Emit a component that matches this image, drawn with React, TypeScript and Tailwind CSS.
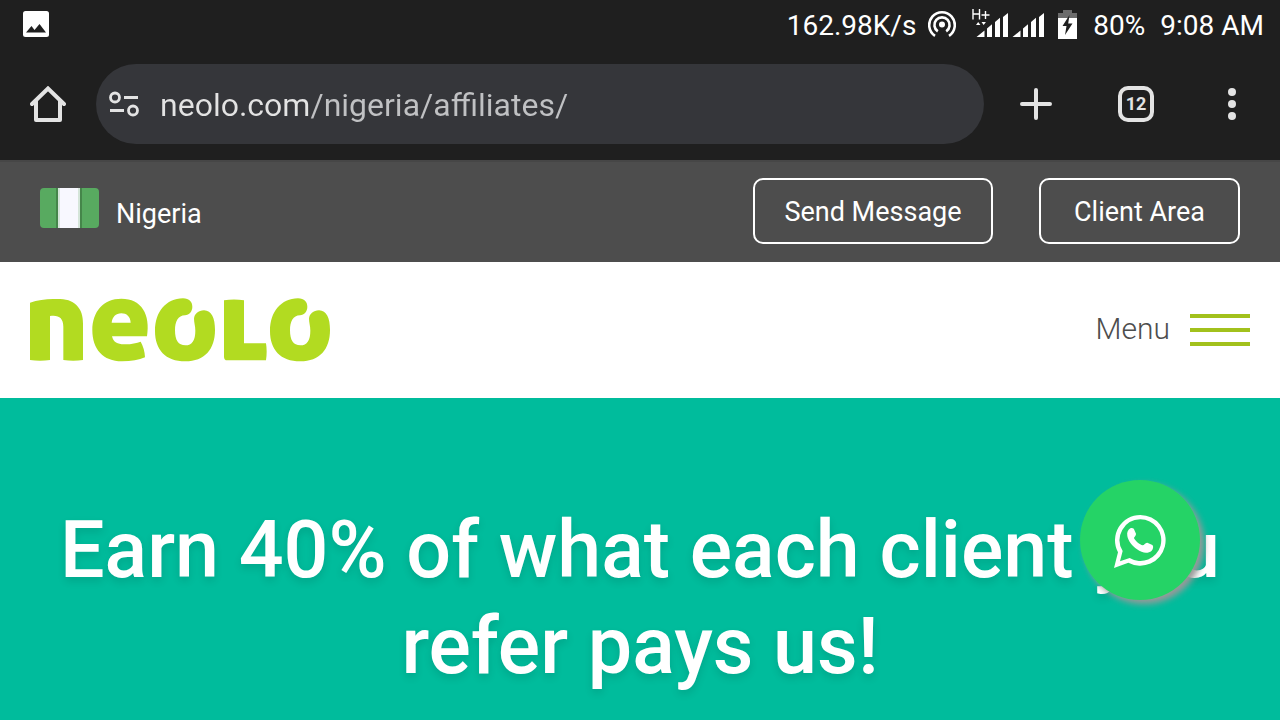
function PictureIcon() {
  return (
    <svg className="size-[26px]" viewBox="0 0 26 26" aria-hidden="true">
      <rect width="26" height="26" rx="2.500" fill="#fff" />
      <path d="M3 21.500 8.500 15l3 4 5-6 6.500 8.500z" fill="#1f1f1f" />
    </svg>
  );
}

function HotspotIcon() {
  return (
    <svg className="h-7 w-7" viewBox="0 0 28 28" fill="none" stroke="#fff" strokeWidth="2.600" aria-hidden="true">
      <circle cx="14" cy="14.500" r="3" fill="#fff" stroke="none" />
      <path d="M9.800 21.300A7.600 7.600 0 1 1 18.200 21.300" />
      <path d="M7 25.800A12.800 12.800 0 1 1 21 25.800" />
    </svg>
  );
}

function SignalIcon() {
  return (
    <svg className="-mt-1 h-[29px] w-[72px]" viewBox="0 0 72 29" fill="#fff" aria-hidden="true">
      <path d="M4.500 29l8-6.500V29zM15 20.500l5-4.300V29h-5zM23 14l5-4.300V29h-5zM31 9l5-4v24h-5z" />
      <path d="M40.500 29l8-6.500V29zM51 20.500l5-4.300V29h-5zM59 14l5-4.300V29h-5zM67 9l5-4v24h-5z" />
      <path d="M4 17l2.200-3 2.200 3zM9.500 14h4.400l-2.200 3z" />
      <path d="M1 1v10.500M7.500 1v10.500M1 6h6.500M9.500 7h8M13.500 3v8" fill="none" stroke="#fff" strokeWidth="1.400" />
    </svg>
  );
}

function BatteryIcon() {
  return (
    <svg className="h-[29px] w-[19px]" viewBox="0 0 19 29" aria-hidden="true">
      <path d="M5 0h9v3h5v5H0V3h5z" fill="#6b6b6b" />
      <path d="M0 8h19v21H0z" fill="#fff" />
      <path d="M11.500 5 4.500 16h4L7 25l7.500-11.500h-4.300z" fill="#1f1f1f" />
    </svg>
  );
}

function StatusBar() {
  return (
    <div className="flex h-12 items-center justify-between pl-[23px] pr-4 text-[28px] leading-8 text-white">
      <PictureIcon />
      <div className="flex items-center">
        <span className="mt-1">162.98K/s</span>
        <span className="ml-3"><HotspotIcon /></span>
        <span className="ml-4"><SignalIcon /></span>
        <span className="ml-3.5"><BatteryIcon /></span>
        <span className="ml-4 mt-1">80%</span>
        <span className="ml-[15px] mt-1">9:08 AM</span>
      </div>
    </div>
  );
}

function HomeIcon() {
  return (
    <svg className="h-9 w-9" viewBox="0 0 36 36" fill="none" stroke="#e3e3e3" strokeWidth="4" strokeLinejoin="round" strokeLinecap="round" aria-hidden="true">
      <path d="M2 18 18 2.500 34 18" strokeLinejoin="miter" />
      <path d="M6 15v19h24V15" />
    </svg>
  );
}

function SiteSettingsIcon() {
  return (
    <svg className="h-[26px] w-[30px]" viewBox="0 0 30 26" fill="none" stroke="#e3e3e3" strokeWidth="2.800" aria-hidden="true">
      <circle cx="6" cy="6.500" r="4.500" />
      <circle cx="24" cy="19.500" r="4.500" />
      <path d="M15 6.500h14M1 19.500h14" />
    </svg>
  );
}

function BrowserBar() {
  return (
    <div className="flex h-28 items-center pl-7 pr-9">
      <button type="button" aria-label="Home" className="flex w-10 shrink-0 justify-center">
        <HomeIcon />
      </button>
      <div className="ml-7 flex h-20 min-w-0 flex-1 items-center rounded-full bg-[#35363a] pl-[13px] pr-8">
        <button type="button" aria-label="Site settings" className="shrink-0">
          <SiteSettingsIcon />
        </button>
        <input
          type="text"
          aria-label="Address"
          defaultValue="neolo.com/nigeria/affiliates/"
          spellCheck={false}
          className="ml-[21px] h-12 min-w-0 flex-1 bg-linear-to-r from-[#e3e3e3] from-[149px] to-[#c0c1c3] to-[149px] bg-clip-text pt-0.5 text-[32px] text-transparent outline-none"
        />
      </div>
      <button type="button" aria-label="New tab" className="ml-8 flex w-10 shrink-0 justify-center">
        <svg className="h-8 w-8" viewBox="0 0 32 32" stroke="#e3e3e3" strokeWidth="4" strokeLinecap="round" aria-hidden="true">
          <path d="M16 2v28M2 16h28" />
        </svg>
      </button>
      <button
        type="button"
        aria-label="12 open tabs"
        className="ml-[62px] flex size-9 shrink-0 items-center justify-center rounded-[10px] border-4 border-[#e3e3e3] text-lg leading-none font-bold text-[#e3e3e3]"
      >
        12
      </button>
      <button type="button" aria-label="More options" className="ml-[66px] flex w-6 shrink-0 flex-col items-center gap-1">
        <span className="size-2 rounded-full bg-[#e3e3e3]" />
        <span className="size-2 rounded-full bg-[#e3e3e3]" />
        <span className="size-2 rounded-full bg-[#e3e3e3]" />
      </button>
    </div>
  );
}

function NigeriaFlag() {
  return (
    <svg className="h-10 w-[59px]" viewBox="0 0 59 40" aria-hidden="true">
      <rect width="59" height="40" rx="4" fill="#58aa60" />
      <path d="M16 0h4v40h-4zM38 0h4v40h-4z" fill="#45864a" />
      <path d="M18 0h22v40H18z" fill="#d5e5da" />
      <path d="M20 0h18v40H20z" fill="#f8f8ff" />
    </svg>
  );
}

function TopBar() {
  const button = "flex h-[66px] items-center justify-center rounded-[10px] border-2 border-white pt-0.5";
  return (
    <div className="flex h-[102px] items-center justify-between border-t-2 border-[#464646] bg-[#4d4d4d] px-10 pb-0.5 text-[27px] text-white">
      <a href="#country" className="flex items-start gap-[17px] leading-10">
        <NigeriaFlag />
        <span className="pt-1.5">Nigeria</span>
      </a>
      <div className="flex gap-[46px]">
        <a href="#message" className={button + " w-60"}>Send Message</a>
        <a href="#client" className={button + " w-[201px]"}>Client Area</a>
      </div>
    </div>
  );
}

function NeoloLogo() {
  return (
    <svg className="h-16 w-[300px]" viewBox="60 53 900 192" fill="#b2db21" role="img" aria-label="Neolo">
      <path d="M60 67Q93 56 130 56C166 55 184 59 199 74C214 89 219 107 219 130V239Q190 244 160 239V139C160 112 145 103 120 107V239Q90 244 60 239Z" />
      <path fillRule="evenodd" d="M411 168H306C310 187 325 193 346 192Q374 191 392 184Q404 205 405 231Q378 243 336 243C279 243 247 206 247 149C247 94 280 55 334 55C395 55 422 103 411 168ZM305 127H362C361 109 350 99 334 99C317 99 307 110 305 127Z" />
      <path id="logo-o" d="M519 54C538 54 547 65 547 79C547 94 538 103 525 105C504 106 495 123 495 150C495 180 505 195 526 195C547 195 556 179 556 151C556 136 552 127 552 115C553 101 565 90 582 90C605 91 615 113 615 149C615 207 584 243 526 243C466 243 435 208 435 152C435 94 468 55 519 54Z" />
      <path d="M642 60Q672 55 702 60V189H768Q772 213 768 240H652Q642 240 642 229Z" />
      <use href="#logo-o" x="345" />
    </svg>
  );
}

function SiteHeader() {
  return (
    <header className="flex h-[136px] items-center justify-between bg-white px-[30px]">
      <a href="#home"><NeoloLogo /></a>
      <button type="button" className="flex items-center gap-5 text-[30px] font-light text-[#4d4d4d]">
        <span className="pb-1">Menu</span>
        <span className="flex w-[60px] flex-col gap-2.5">
          <span className="h-1 bg-[#a2c11c]" />
          <span className="h-1 bg-[#a2c11c]" />
          <span className="h-1 bg-[#a2c11c]" />
        </span>
      </button>
    </header>
  );
}

function WhatsAppIcon() {
  return (
    <svg className="mt-0.5 h-[53px] w-[52px]" viewBox="19 21 156 159" fill="#fff" aria-hidden="true">
      <path
        fillRule="evenodd"
        d="M98 21A76 76 0 1 1 62 164L19 180L31 133A76 76 0 0 1 98 21ZM98 34A62.500 62.500 0 0 0 45 129L37 160L66 150A62.500 62.500 0 1 0 98 34Z"
      />
      <path d="M68 61C74 58 79 61 80 66L85 77C86 82 79 87 79 90C81 97 97 111 105 112C110 112 113 103 119 104L134 111C138 114 137 123 132 128C121 138 104 136 88 124C74 114 61 98 59 84C57 73 61 65 68 61Z" />
    </svg>
  );
}

export default function App() {
  return (
    <div className="flex min-h-screen flex-col bg-[#00bc9c] font-['Roboto',sans-serif]">
      <div className="bg-[#1f1f1f]">
        <StatusBar />
        <BrowserBar />
      </div>
      <TopBar />
      <SiteHeader />
      <main className="flex-1 px-10 pt-[104px]">
        <h1 className="text-center text-[79px] leading-[96px] font-medium text-white [text-shadow:0_4px_8px_rgba(0,0,0,0.12)]">
          Earn 40% of what each client you refer pays us!
        </h1>
      </main>
      <a
        href="#whatsapp"
        aria-label="WhatsApp"
        className="fixed right-20 bottom-[120px] flex size-[120px] items-center justify-center rounded-full bg-[#25d366] shadow-[4px_4px_6px_#999]"
      >
        <WhatsAppIcon />
      </a>
    </div>
  );
}
